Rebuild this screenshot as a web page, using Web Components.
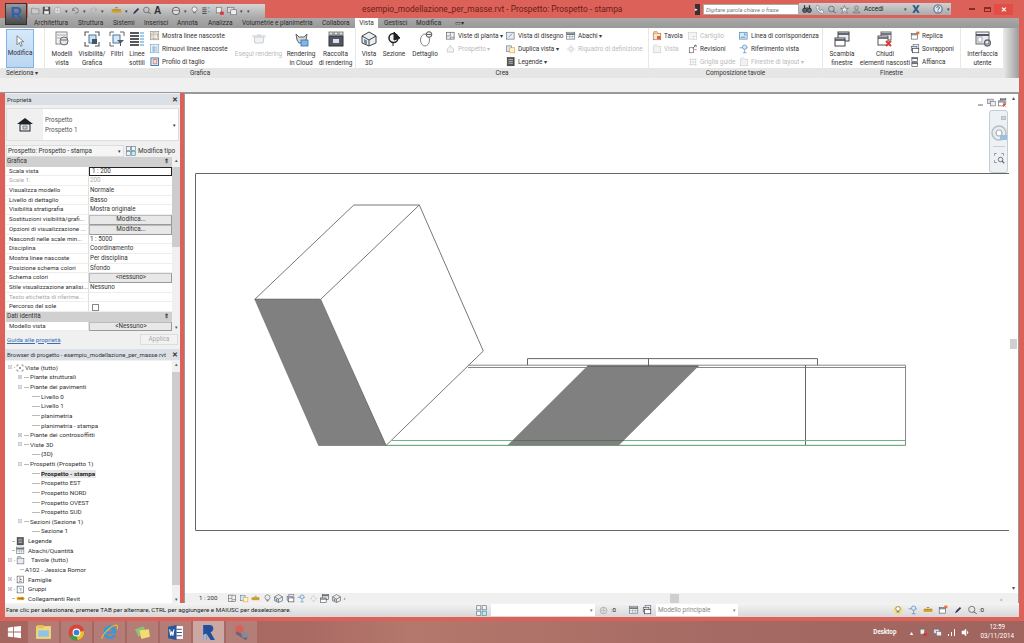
<!DOCTYPE html>
<html lang="it"><head><meta charset="utf-8"><title>Revit</title>
<style>
html,body{margin:0;padding:0;width:1024px;height:643px;overflow:hidden;background:#a96a63;font-family:Roboto,"Noto Sans",sans-serif;}
</style></head><body>
<script>
const S=(c,w=1,f='none')=>`fill="${f}" stroke="${c}" stroke-width="${w}"`;
const I={
cursor:`<path d="M4 1v12l3-3 2 5 2-1-2-5h4z" ${S('#666',1,'#fff')}/>`,
models:`<rect x="2" y="1" width="11" height="12" ${S('#888',1,'#f2f2f2')}/><path d="M3 4h9M3 7h4" ${S('#aaa')}/><ellipse cx="10" cy="10" rx="4" ry="4" ${S('#666',1,'#dfe8f2')}/><path d="M7 9h6" ${S('#666')}/>`,
vis:`<path d="M1 5V1h4M11 1h4v4M15 11v4h-4M5 15H1v-4" ${S('#555',1.1)}/><rect x="5" y="4" width="7" height="8" ${S('#47a',1,'#cfe0ee')}/><rect x="8" y="8" width="5" height="5" fill="#456"/>`,
filt:`<path d="M1 5V1h4M11 1h4v4M5 15H1v-4" ${S('#666',1)}/><rect x="4" y="4" width="7" height="8" ${S('#47a',1,'#dbe8f2')}/><path d="M8 9h7l-3 3v3h-1v-3z" fill="#556"/>`,
lines:`<path d="M1 2h9M1 5h9M1 8h9M1 11h9M1 14h9" ${S('#222',1.5)}/><path d="M11 2h4M11 5h4M11 8h4M11 11h4M11 14h4" ${S('#49c',1)}/>`,
show:`<rect x="1" y="1" width="13" height="13" ${S('#7a8a9a',1,'#fff')}/><rect x="3" y="3" width="9" height="9" ${S('#d9a050',1,'#f7f1e2')}/><path d="M1 6h13M6 1v13" ${S('#7aa5c8',.8)}/>`,
rem:`<rect x="1" y="1" width="13" height="13" ${S('#7aa5c8',1,'#e9f2f9')}/><path d="M3 5h9M3 8h9M3 11h9M6 3v10" ${S('#6a9ac0',.9)}/>`,
crop:`<rect x="1.500" y="1.500" width="12" height="12" ${S('#2a6fb0',1.4,'#e9f2f9')}/><rect x="5" y="4" width="6" height="7" ${S('#d06050',1,'#f5d9c8')}/>`,
teapotg:`<path d="M3 6h10l-1 6H4zM1 5h14M6 4h4" ${S('#c9ced2',1,'#f1f3f4')}/>`,
teapot:`<path d="M3 3l3 3h5l3-3-1 6-3 3H6L4 9z" ${S('#555',.9,'#cfd8de')}/><rect x="8" y="9" width="7" height="6" ${S('#2f6fb4',.8,'#86b4e0')}/>`,
gallery:`<rect x="1" y="1" width="4" height="3" ${S('#666',.8,'#e0e0e0')}/><rect x="6" y="1" width="4" height="3" ${S('#666',.8,'#e0e0e0')}/><rect x="11" y="1" width="4" height="3" ${S('#666',.8,'#e0e0e0')}/><rect x="1" y="5" width="14" height="10" ${S('#333',1,'#556')}/><rect x="5" y="8" width="6" height="4" fill="#d7e4ee"/>`,
house:`<path d="M8 1l7 4v7l-7 3-7-3V5z" ${S('#444',1,'#e9eef2')}/><path d="M1 5l7 4 7-4M8 9v6" ${S('#444',1)}/><path d="M3 8l3 1.500v4L3 12z" fill="#6d8aa0"/>`,
section:`<circle cx="7.500" cy="7" r="4.500" ${S('#222',1.5,'#eef2f5')}/><path d="M8 1l6 6-6 2zM7 11v4" fill="#222" stroke="#222"/>`,
detail:`<path d="M3.500 9a4.500 6 0 1 0 9 0a4.500 6 0 1 0-9 0" ${S('#777',.9,'#fff')}/><circle cx="12" cy="3.500" r="2.800" ${S('#444',.9,'#eee')}/><path d="M9.500 3.500h5" ${S('#444',.8)}/>`,
plan:`<rect x="1" y="2" width="12" height="11" ${S('#555',1,'#eef2f5')}/><path d="M1 8h6V2M7 13v-3h6" ${S('#555',.9)}/>`,
elev:`<path d="M2 8l5-5 5 5v5H2z" ${S('#bbb',1,'#f3f3f3')}/><path d="M7 1v4" ${S('#c9c9c9')}/>`,
draw:`<rect x="1" y="2" width="12" height="11" ${S('#666',1,'#e7eef5')}/><path d="M4 10l6-6" ${S('#4a84bb',1.2)}/>`,
dup:`<rect x="1" y="3" width="8" height="9" ${S('#5a7a99',1,'#d8e6f2')}/><rect x="6" y="6" width="8" height="8" ${S('#e6a030',1,'#fff2cf')}/>`,
leg:`<rect x="2" y="1" width="11" height="13" ${S('#333',1,'#555')}/><path d="M4 4h7M4 7h7M4 10h7" ${S('#eee',1)}/>`,
sched:`<rect x="1" y="2" width="13" height="11" ${S('#5a6672',1,'#fff')}/><path d="M1 5h13" ${S('#56606a',2.4)}/><path d="M1 9h13M6 5v8M10 5v8" ${S('#7a8a96',.8)}/>`,
scope:`<path d="M8 1v14M1 8h14" ${S('#c9c9c9',1)}/><rect x="5" y="5" width="6" height="6" ${S('#ccc',1,'#f3f3f3')}/>`,
sheet:`<rect x="2" y="4" width="12" height="10" ${S('#a66',1,'#f6e6cc')}/><path d="M3 4V1h5l2 3" ${S('#d48a35',1.2,'#ffd58c')}/><rect x="8" y="8" width="6" height="5" fill="#e2613d"/>`,
sheetg:`<rect x="2" y="4" width="12" height="10" ${S('#ccc',1,'#f2f2f2')}/><path d="M3 4V1h5l2 3" ${S('#ddd',1,'#f4f4f4')}/>`,
sheets:`<rect x="2" y="4" width="12" height="10" ${S('#667',1,'#e8edf1')}/><path d="M3 4V1h5l2 3" ${S('#778',1,'#cdd6de')}/>`,
title:`<rect x="1" y="2" width="13" height="11" ${S('#ccc',1,'#f4f4f4')}/><rect x="9" y="9" width="5" height="4" ${S('#ccc',.8,'#fff')}/>`,
rev:`<rect x="2" y="6" width="7" height="8" ${S('#555',1,'#fff')}/><path d="M8 7l4-5M10 2h3v3" ${S('#444',1.1)}/><path d="M10 9h4" ${S('#c44',1)}/>`,
grid:`<path d="M2 4h12M2 8h12M2 12h12M4 2v12M8 2v12M12 2v12" ${S('#ccc',.9,'#f5f5f5')}/>`,
match:`<rect x="1" y="2" width="12" height="11" ${S('#3c79b4',1,'#d9e8f4')}/><path d="M8 2l5 5H8z" fill="#7fb2dc"/><path d="M3 10h7" ${S('#3c79b4',1.2)}/>`,
ref:`<path d="M1 6h13" ${S('#5a8fc2',1.2)}/><circle cx="9" cy="5" r="3.500" ${S('#4a80b4',1,'#d9e8f4')}/><path d="M9 9v5M6 14h6" ${S('#4a80b4',1)}/>`,
swap:`<rect x="4" y="1" width="11" height="9" ${S('#444',1,'#e8eef3')}/><path d="M4 3h11" ${S('#445',1.6)}/><rect x="1" y="7" width="10" height="8" ${S('#444',1,'#fff')}/><path d="M1 9h10" ${S('#445',1.6)}/>`,
close:`<rect x="4" y="1" width="10" height="8" ${S('#666',1,'#eef1f4')}/><path d="M4 3h10" ${S('#556',1.6)}/><rect x="1" y="5" width="10" height="9" ${S('#555',1,'#fff')}/><path d="M1 7h10" ${S('#556',1.6)}/><path d="M9 10l5 5M14 10l-5 5" ${S('#e03a30',2)}/>`,
repl:`<rect x="2" y="4" width="10" height="9" ${S('#555',1,'#fff')}/><path d="M2 6h10" ${S('#556',1.4)}/><rect x="10" y="1" width="5" height="4" fill="#e8703a"/>`,
casc:`<rect x="5" y="1" width="9" height="7" ${S('#667',1,'#e8eef3')}/><rect x="2" y="4" width="9" height="7" ${S('#556',1,'#d8e2ea')}/><rect x="4" y="7" width="10" height="7" ${S('#334',1,'#fff')}/>`,
tile:`<rect x="3" y="1" width="9" height="6" ${S('#334',1,'#fff')}/><rect x="3" y="9" width="9" height="6" ${S('#334',1,'#fff')}/><path d="M3 2.500h9M3 10.500h9" ${S('#334',1.2)}/>`,
ui:`<rect x="1" y="1" width="13" height="12" ${S('#666',1,'#e8edf1')}/><path d="M1 4h13" ${S('#556',2)}/><rect x="3" y="6" width="4" height="5" ${S('#999',.8,'#fff')}/><circle cx="12.500" cy="12" r="3" ${S('#667',1.3)}/>`,
homeb:`<path d="M8 1l8 6H0z" fill="#222"/><rect x="3" y="7" width="10" height="7" ${S('#222',1,'#e8edf1')}/><rect x="6" y="9" width="4" height="3" ${S('#667',.7,'#c5d3de')}/>`,
type:`<rect x="1" y="1" width="6" height="6" ${S('#678',1,'#f2f5f7')}/><rect x="9" y="1" width="6" height="6" ${S('#678',1,'#f2f5f7')}/><rect x="1" y="9" width="6" height="6" ${S('#678',1,'#f2f5f7')}/><rect x="9" y="9" width="6" height="6" ${S('#39a',1,'#cfe5f2')}/>`,
open:`<path d="M1 4h5l1 1h7v9H1z" ${S('#777',1,'#cbcbcb')}/>`,
save:`<rect x="2" y="2" width="12" height="12" ${S('#333',1,'#556')}/><rect x="5" y="2" width="6" height="4" fill="#ddd"/><rect x="4" y="9" width="8" height="5" fill="#eee"/>`,
globe:`<circle cx="8" cy="8" r="6" ${S('#999',1,'#ddd')}/><path d="M3 8h10M8 2v12" ${S('#aaa',.8)}/>`,
undo:`<path d="M3 8a5 5 0 1 1 4 5M3 4v4h4" ${S('#667',1.2)}/>`,
redo:`<path d="M13 8a5 5 0 1 0-4 5M13 4v4H9" ${S('#aaa',1.2)}/>`,
meas:`<rect x="1" y="6" width="14" height="5" fill="#d8a020"/><path d="M4 6v2M7 6v2M10 6v2M13 6v2" ${S('#665',.8)}/><path d="M6 4h4" ${S('#555',1)}/>`,
pen:`<path d="M3 13l2-4 6-6 2 2-6 6z" fill="#335"/>`,
tag:`<circle cx="6" cy="7" r="5" ${S('#556',1.2)}/><path d="M9 11l5 3" ${S('#556',1.4)}/>`,
sph:`<circle cx="8" cy="8" r="6" ${S('#555',1.4,'#ddd')}/><path d="M3 7h10" ${S('#555',1)}/>`,
bulb:`<circle cx="8" cy="6" r="4.500" ${S('#555',1,'#eee')}/><path d="M6 12h4" ${S('#555',1.5)}/>`,
bulby:`<circle cx="8" cy="8" r="7" fill="#f6dc7a"/><circle cx="8" cy="6" r="3.500" ${S('#665',1,'#fff')}/><path d="M6 11h4" ${S('#555',1.5)}/>`,
tl:`<path d="M2 3h7M2 6h7M2 9h7M2 12h7" ${S('#333',1.2)}/><path d="M11 3h3M11 9h3" ${S('#39c',1.4)}/>`,
winq:`<rect x="2" y="2" width="8" height="9" ${S('#666',1,'#eee')}/><rect x="8" y="9" width="6" height="5" fill="#d33"/>`,
wins:`<rect x="1" y="2" width="10" height="8" ${S('#667',1,'#ddd')}/><rect x="6" y="6" width="9" height="8" ${S('#667',1,'#eee')}/>`,
bino:`<circle cx="4.500" cy="10" r="3.500" ${S('#333',1.5,'#567')}/><circle cx="11.500" cy="10" r="3.500" ${S('#333',1.5,'#567')}/><path d="M4 2v6M12 2v6M7 6h2" ${S('#333',2)}/>`,
phone:`<path d="M3 2l3 1 1 3-2 1a9 9 0 0 0 4 4l1-2 3 1 1 3-2 2C7 15 1 9 2 4z" ${S('#778',1,'#e8eef2')}/>`,
star:`<path d="M8 1l2 5h5l-4 3 2 6-5-4-5 4 2-6-4-3h5z" ${S('#556',1,'#eee')}/>`,
user:`<circle cx="8" cy="5" r="3.200" ${S('#556',1)}/><path d="M2 14c1-5 11-5 12 0z" ${S('#556',1)}/>`,
exch:`<path d="M2 2h4l2 4 2-4h4l-4 6 4 6h-4l-2-4-2 4H2l4-6z" fill="#2d587f"/>`,
help:`<circle cx="8" cy="8" r="6.500" ${S('#446',1.3,'#dce6ee')}/><path d="M5.800 6a2.200 2 0 1 1 3.200 2c-1 .6-1 1-1 2M8 11.500v1.500" ${S('#247',1.4)}/>`,
minus:`<path d="M2 12h10" stroke="#444" stroke-width="1.600"/>`,
plus:`<rect x="3" y="3" width="8" height="8" ${S('#aab',1,'#f4f4f4')}/><path d="M5 7h4M7 5v4" ${S('#778',1)}/>`,
minusb:`<rect x="3" y="3" width="8" height="8" ${S('#aab',1,'#f4f4f4')}/><path d="M5 7h4" ${S('#778',1)}/>`,
steer:`<circle cx="8" cy="8" r="7" ${S('#b4bcc3',1.4,'#e9edf0')}/><circle cx="8" cy="8" r="3" ${S('#a8b1b9',1.2,'#fff')}/><rect x="9" y="10" width="7" height="5" fill="#9cc1de"/>`,
zoomv:`<path d="M2 2h3M2 2v3M14 2h-3M14 2v3M2 14h3M2 14v-3" ${S('#889',1.1)}/><circle cx="10" cy="10" r="3" ${S('#667',1.2)}/><path d="M12 12l3 3" ${S('#667',1.5)}/>`,
views:`<path d="M2 2h3M11 2h3M2 14h3M11 14h3M2 2v3M14 2v3M2 11v3M14 11v3" ${S('#555',1.2)}/><circle cx="8" cy="8" r="2" fill="#777"/>`,
famiglie:`<rect x="2" y="2" width="11" height="12" ${S('#445',1,'#fff')}/><path d="M7 4v4h3M5 11h5" ${S('#333',1.1)}/>`,
gruppi:`<rect x="2" y="2" width="11" height="12" ${S('#445',1,'#fff')}/><path d="M5 5l5 2-3 2 3 2" ${S('#4a90c2',1.1)}/>`,
link:`<ellipse cx="5" cy="8" rx="4" ry="3" fill="#e8a810"/><ellipse cx="11" cy="8" rx="4" ry="3" fill="#d39410"/><path d="M4 8h8" ${S('#7c5b10',1)}/>`,
};
function ic(n,s=16,st=''){return `<svg xmlns="http://www.w3.org/2000/svg" width="${s}" height="${s}" viewBox="0 0 16 16" style="display:block;flex:none;${st}">${I[n]||''}</svg>`}
function def(tag,css,html,init){customElements.define(tag,class extends HTMLElement{constructor(){super();this.attachShadow({mode:'open'});}connectedCallback(){if(this._d)return;this._d=1;const a=n=>this.getAttribute(n);this.shadowRoot.innerHTML=`<style>${css}</style>`+(typeof html==='function'?html(a):html);if(init)init(this)}})}
const base=`:host{box-sizing:border-box;font-family:Roboto,"Noto Sans",sans-serif}*{box-sizing:border-box}`;
const setw=el=>{el.style.width=el.getAttribute('w')+'px'};

def('x-app',base+`:host{display:flex;flex-direction:column;width:1024px;height:643px;background:#a96a63}
.win{height:621px;background:#dc6259;display:flex;flex-direction:column;flex:none;padding-bottom:4px}
.body{display:flex;flex:1;min-height:0;padding:0 5px;gap:4px;background:#dc6259}
.side{flex:none;display:flex;width:175px;flex-direction:column;background:#f0f0f0;overflow:hidden}
`,`<div class="win"><slot name="top"></slot><div class="body"><div class="side"><slot name="side"></slot></div><slot name="main"></slot></div><slot name="status"></slot></div><slot name="task"></slot>`);

def('x-titlebar',base+`:host{display:flex;height:18px;flex:none;align-items:center;position:relative;padding-left:28px}
.r{position:absolute;left:5px;top:3px;width:22px;height:22px;background:linear-gradient(#9a9a9a,#4a4a4a);border:1px solid #333;z-index:2;display:flex;align-items:center;justify-content:center;color:#2a63b8;font:900 16px "Liberation Sans",sans-serif}
.q{height:14px;margin-top:3px;width:237px;background:linear-gradient(#d5d5d5,#a8a8a8);display:flex;align-items:center;gap:2px;padding-left:3px;flex:none}
.t{margin-left:97px;font-size:8.4px;color:#6b1d18;width:250px;white-space:nowrap;flex:none}
.d{font-size:5px;color:#444;width:5px;text-align:center;flex:none}
.inf{margin-left:83px;display:flex;align-items:center;height:12px;flex:none}
.box{width:96px;height:11px;background:#fff;border:1px solid #aaa;font:italic 5.800px Roboto,sans-serif;color:#777;padding:1px 0 0 2px;white-space:nowrap;line-height:8px}
.tail{display:flex;align-items:center;gap:3px;background:linear-gradient(#d0d0d0,#aaa);height:12px;padding-left:3px;width:152px;flex:none}
.acc{font-size:6.4px;color:#222;width:50px}
.ar{width:5px;height:11px;background:#333;color:#fff;font-size:5px;line-height:11px;margin-right:3px}
.wb{display:flex;align-items:center;flex:none}
.wb b{display:block;width:6px;height:1.500px;background:#8a2a24;margin:0 9px 0 18px}
.wb i{display:block;width:7px;height:5px;border:1px solid #8a2a24;border-top-width:2px;margin-right:3px}
.wb u{display:block;width:19px;height:11px;background:#e24d45;color:#fff;font:bold 7px/11px "Liberation Sans",sans-serif;text-align:center;text-decoration:none}
`,`<div class="r">R</div><div class="q">${ic('open',9)}${ic('save',9)}${ic('globe',9)}<span class="d">▾</span>${ic('undo',9)}<span class="d">▾</span>${ic('redo',9)}<span class="d">▾</span>${ic('meas',11,'margin-left:4px')}<span class="d">▾</span>${ic('pen',10)}${ic('tag',9)}<span style="font:bold 10px 'Liberation Sans';color:#333;line-height:1;width:9px">A</span>${ic('sph',10,'margin-left:6px')}<span class="d">▾</span>${ic('bulb',9)}${ic('tl',10)}${ic('winq',10,'margin-left:2px')}${ic('wins',10)}<span class="d">▾</span><span class="d">▾</span></div>
<div class="t">esempio_modellazione_per_masse.rvt - Prospetto: Prospetto - stampa</div>
<div class="inf"><div class="ar">▸</div><div class="box">Digitare parola chiave o frase</div><div class="tail">${ic('bino',10)}${ic('phone',10)}${ic('tag',9)}${ic('star',9)}${ic('user',9)}<span class="acc">Accedi</span><span class="d">▾</span>${ic('exch',10)}<span style="width:8px"></span>${ic('help',10)}<span class="d">▾</span></div></div>
<div class="wb"><b></b><i></i><u>✕</u></div>`);

def('x-tabs',base+`:host{display:flex;height:10px;flex:none;margin:0 5px 0 0;background:linear-gradient(#a9a9a9,#999);padding-left:34px;font-size:6.5px;line-height:10px;color:#2b2b2b;white-space:nowrap}
::slotted(*){flex:none}`,`<slot></slot>`);
def('x-tab',base+`:host{display:block;flex:none}
:host([on]){background:#fff;text-align:center;color:#333}`,`<slot></slot>`);

def('x-ribbon',base+`:host{display:flex;height:50px;flex:none;background:#fff;margin-right:5px}
.e{width:15px;flex:none;background:linear-gradient(90deg,#e6e6e6,#9c9c9c)}`,`<slot></slot><div class="e"></div>`);
def('x-strip',base+`:host{display:block;height:15px;background:#f0f0f0;border-bottom:1px solid #999;margin-right:5px;flex:none}`,``);
def('x-rp',base+`:host{display:flex;flex-direction:column;flex:none;border-right:1px solid #e8e8e8}
.c{height:40px;display:flex;background:#fff}
.l{height:10px;background:#e6e6e6;font-size:6.4px;line-height:10px;text-align:center;color:#333;white-space:nowrap}
::slotted(*){flex:none}`,a=>`<div class="c"><slot></slot></div><div class="l">${a('label')||''}</div>`,setw);
def('x-tool',base+`:host{display:flex;flex-direction:column;align-items:center;flex:none;font-size:6.4px;line-height:9px;color:#333;text-align:center;padding-top:3px;white-space:nowrap}
:host([dis]){color:#bbb}
.lb{margin-top:3px}
:host([sel]){background:linear-gradient(#d6e9fa,#b9d6f1);border:1px solid #7fb5e6;padding-top:5px;margin-top:1px;height:39px}
:host([sel]) .lb{margin-top:2px}`,a=>`${ic(a('n'),+a('s')||16)}<div class="lb"><slot></slot></div>`,setw);
def('x-col',base+`:host{display:flex;flex-direction:column;flex:none;padding-top:2.500px;gap:3.300px}`,`<slot></slot>`,setw);
def('x-sm',base+`:host{display:flex;align-items:center;gap:2px;height:10px;font-size:6.4px;color:#333;white-space:nowrap;flex:none}
:host([dis]){color:#bbb}`,a=>`${a('n')?ic(a('n'),10):'<span style="width:10px;display:block"></span>'}<slot></slot>`);

def('x-pane',base+`:host{display:block;flex:none}
.h{height:11px;background:#dbe0e6;display:flex;justify-content:space-between;align-items:center;font-size:6px;padding:0 2px;color:#333;white-space:nowrap;margin-top:1px}
.h b{font:bold 7px "Liberation Sans";color:#333}`,a=>`<div class="h"><span>${a('heading')}</span><b>✕</b></div><slot></slot>`);

def('x-props',base+`:host{display:block;font-size:6.300px;color:#333}
.sel{height:33px;margin:3px 1px 0;background:#fff;border:1px solid #ddd;display:flex;align-items:center}
.ih{width:36px;height:100%;background:#f0f0f0;display:flex;align-items:center;justify-content:center}
.tx{padding:2.500px 0 0 2px;line-height:9.500px;color:#555;flex:1}
.dd{font-size:5px;margin-right:2px;color:#333}
.row{display:flex;align-items:center;height:13px;margin:3px 1px 0;gap:2px}
.cb{width:118px;height:12px;background:#f5f5f5;border:1px solid #ddd;padding-left:1px;line-height:10px;display:flex;justify-content:space-between;white-space:nowrap}
.mt{display:flex;align-items:center;gap:2px;white-space:nowrap;font-size:6.400px}
.tb{display:flex;height:174px;margin:0 0 0 1px;overflow:hidden}
.list{width:166px;flex:none;display:block;overflow:hidden}
.scr{width:8px;background:#f0f0f0;display:flex;flex-direction:column;font-size:5px;color:#555;text-align:center;flex:none}
.thumb{background:#cdcdcd;height:80px;margin-top:3px}
.ft{height:17px;display:flex;align-items:center;justify-content:space-between;padding:0 2px;background:#f0f0f0}
.ft a{color:#3b6fb5;text-decoration:underline;font-size:6.200px}
.ft i{font-style:normal;width:38px;height:11px;border:1px solid #ddd;color:#aaa;text-align:center;line-height:9px;background:#f2f2f2}`,
`<div class="sel"><div class="ih">${ic('homeb',16)}</div><div class="tx">Prospetto<br>Prospetto 1</div><div class="dd">▾</div></div>
<div class="row"><div class="cb"><span>Prospetto: Prospetto - stampa</span><span style="font-size:5px;margin-right:2px">▾</span></div><div class="mt">${ic('type',10)}<span>Modifica tipo</span></div></div>
<div class="tb"><div class="list"><slot></slot></div><div class="scr"><span style="height:7px;line-height:7px">▴</span><div class="thumb"></div><span style="margin-top:auto;height:7px;line-height:7px">▾</span></div></div>
<div class="ft"><a>Guida alle proprietà</a><i>Applica</i></div>`);
def('x-sec',base+`:host{display:flex;justify-content:space-between;height:9.700px;background:#d0d0d0;font-size:6.300px;line-height:9.700px;padding:0 3px 0 1px;color:#333}
.ch{font:bold 6px/9.700px "Liberation Sans";}`,`<slot></slot><span class="ch">⇑</span>`);
def('x-pr',base+`:host{display:grid;grid-template-columns:83px 83px;height:9.700px;font-size:6.300px;line-height:9px;color:#333;background:#fff;white-space:nowrap;overflow:hidden}
.n{padding-left:3px;font-size:6.150px;border-right:1px solid #e0e0e0;border-bottom:1px solid #eee;overflow:hidden}
.v{padding-left:1px;border-bottom:1px solid #eee;overflow:hidden}
:host([dim]){color:#aaa}
:host([btn]) .v{background:#e8e8e8;border:1px solid #bbb;border-right-color:#999;border-bottom-color:#999;text-align:center;line-height:7.500px}
:host([act]) .v{border:1px solid #222;line-height:7.500px;padding-left:2px}
:host([chk]) .v span{display:block;width:7px;height:7px;border:1px solid #888;margin:1.300px 0 0 2px}`,a=>`<div class="n">${a('n')}</div><div class="v">${a('chk')!==null?'<span></span>':(a('v')||'').replace(/</g,'&lt;')}</div>`);

def('x-tree',base+`:host{display:flex;height:242px;background:#fff;margin-top:1px;overflow:hidden}
.l{flex:1;padding-top:2px}
.s{width:8px;background:#f0f0f0;display:flex;flex-direction:column;font-size:5px;text-align:center;color:#555;flex:none}
.t{background:#cdcdcd;height:213px;margin-top:4px}`,`<div class="l"><slot></slot></div><div class="s"><span style="height:7px;line-height:7px">▴</span><div class="t"></div><span style="margin-top:auto;height:7px;line-height:7px">▾</span></div>`);
def('x-tr',base+`:host{display:flex;align-items:center;height:9.640px;font-size:6.250px;color:#333;white-space:nowrap}
.tg{width:7px;flex:none}
.ln{flex:none;height:1px;background:#bbb;margin-right:1px}
span{display:block}
:host([cur]) span.tx{background:#e6e6e6;font-weight:700;padding-right:1px;color:#222}`,a=>{const x=+a('x')||0,t=a('tg'),n=a('n'),m=a('m')||3,s=+a('s')||9;return `<div style="width:${x}px;flex:none"></div>${t?ic(t=='p'?'plus':'minusb',7):'<div class="tg"></div>'}<div class="ln" style="width:${a('l')}px"></div>${n?ic(n,s,`margin-right:${m}px`):''}<span class="tx"><slot></slot></span>`});

def('x-view',base+`:host{flex:1;min-width:0;display:flex;flex-direction:column;background:#fff;border:1px solid #999;border-bottom:none;position:relative}
svg.d{display:block;flex:1;width:100%;min-height:0}
.bar{height:10px;flex:none;background:#f0f0f0;display:flex;align-items:center;font-size:6.200px;color:#333;padding-left:14px}
.ics{display:flex;gap:2.500px;margin-left:11px;align-items:center}
.th{margin-left:325px;width:9px;height:9px;background:#cfcfcf}
.tp{position:absolute;top:4px;right:11px;display:flex;gap:2px;align-items:center}
.nav{position:absolute;right:10px;top:16px;width:19px;height:63px;background:#eef1f4;border:1px solid #c5ccd2;border-radius:3px;display:flex;flex-direction:column;align-items:center;gap:5px;padding-top:5px}
.sq{width:5px;height:4px;background:#cfd4d8;border:1px solid #b8bec3;align-self:flex-end;margin-right:1px}
.sc{position:absolute;right:0;top:0;bottom:10px;width:9px;background:#fff;font-size:6px;color:#555;text-align:center;display:flex;flex-direction:column}
.th2{position:absolute;right:1px;top:245px;width:7px;height:10px;background:#d0d0d0}
.ar{margin-left:auto;font-size:6px;margin-right:16px}`,
`<svg class="d" viewBox="185 94 833 499" preserveAspectRatio="none" xmlns="http://www.w3.org/2000/svg">
<g fill="none" stroke="#777" stroke-width="1">
<path d="M195.500 173.500H1009M195.500 173.500V530.500H1009" stroke="#666"/>
<path d="M254.800 299.300L353.800 205H419.300L483.300 351L386 445.500L319.500 299.300H254.800M320.700 299.300L419.300 205"/>
<path d="M468 365.200H905.500V445.500H386M468 367.500H905.500" stroke="#888"/>
<path d="M805.500 365V445.500" stroke="#666"/>
<path d="M527.500 365V358.600H817.500V365M648.500 358.600V366" stroke="#666"/>
<path d="M386 445.300H905" stroke="#6fb283"/>
<path d="M392 440.500H905" stroke="#6fb283"/>
</g>
<path d="M254.800 299.300H320.700L386 445.500H318.700Z" fill="#808080" stroke="#666" stroke-width=".6"/>
<path d="M587.300 366H698.700L618.700 445.500H507.300Z" fill="#808080"/>
<path d="M587.300 366H698.700" stroke="#555" fill="none"/>
<path d="M513 440.500H624" stroke="#5a6f5f" fill="none"/>
</svg>
<div class="tp">${ic('minus',8)}${ic('wins',9)}${ic('close',9)}</div>
<div class="sc"><span style="height:9px">▴</span><span style="margin-top:auto;height:9px">▾</span></div><div class="th2"></div>
<div class="nav"><span class="sq"></span>${ic('steer',16)}<span style="width:12px;height:1px;background:#ccd"></span>${ic('zoomv',12)}</div>
<div class="bar">1 : 200<div class="ics">${ic('plan',9)}${ic('dup',9)}${ic('meas',9)}${ic('bulb',9)}${ic('house',9)}${ic('casc',9)}${ic('ref',9)}${ic('scope',9)}${ic('swap',9)}${ic('house',9)}<span>‹</span></div><div class="th"></div><div class="ar">›</div></div>`);

def('x-status',base+`:host{display:flex;height:14px;flex:none;margin:0 5px;align-items:center;background:linear-gradient(#f4f4f4,#d7d7d7);font-size:6.250px;color:#222;white-space:nowrap}
.m{width:471px;padding-left:1px;flex:none}
.w{width:104px;height:12px;background:#fff;margin-left:4px;flex:none;font-size:5px;text-align:right;line-height:12px;padding-right:2px;color:#777}
.n{display:flex;align-items:center;gap:3px;margin-left:4px;flex:none}
.c{width:82px;height:12px;background:#fff;color:#888;margin-left:4px;font-size:6.400px;line-height:12px;padding-left:2px;display:flex;justify-content:space-between;padding-right:2px;flex:none}
.r{display:flex;gap:5px;margin-left:155px;align-items:center;flex:none}`,
`<div class="m">Fare clic per selezionare, premere TAB per alternare, CTRL per aggiungere e MAIUSC per deselezionare.</div>${ic('type',11)}<div class="w">▾</div><div class="n">${ic('globe',9)}<span>:0</span><span style="width:7px"></span>${ic('sched',10)}${ic('casc',10)}</div><div class="c"><span>Modello principale</span><span style="font-size:5px">▾</span></div><div class="r">${ic('bulby',10)}${ic('ref',10)}${ic('meas',10)}${ic('repl',10)}${ic('pen',10)}${ic('tag',10)}<span style="margin-left:-4px">:0</span></div>`);

const TI={
start:`<g fill="#fff"><path d="M1 3l6-1v5.500H1zM8 2l8-1v6.500H8zM1 8.500h6V14l-6-1zM8 8.500h8V15l-8-1z"/></g>`,
folder:`<rect x="1" y="2" width="14" height="12" fill="#f0d77a"/><rect x="3" y="6" width="10" height="6" fill="#8fc3e8"/><rect x="2" y="1" width="6" height="3" fill="#e8c34e"/>`,
chrome:`<circle cx="8" cy="8" r="7.500" fill="#d9463a"/><path d="M8 8L1.500 12A7.500 7.500 0 0 0 9 15.400z" fill="#3f9d48"/><path d="M8 8l7 -1.500A7.500 7.500 0 0 1 9 15.400z" fill="#e8c32e"/><circle cx="8" cy="8" r="3.200" fill="#3f7fd0" stroke="#fff"/>`,
ie:`<path d="M14 9H5c.3 3 4.500 4 6.500 1.400h2.700C12 15.700 3 15.500 2.300 8.500 2.200 3.500 6 1.500 9 1.500c3.800 0 5.500 3.500 5 7.500zM5.200 7h6c-.4-3-5.300-3-6 0z" fill="#2f9ae0"/><path d="M1 14C0 11 9 2 14 1c2 0 2 2 1 4" fill="none" stroke="#e8c32e" stroke-width="1"/>`,
sticky:`<path d="M1 5l8-3 3 7-8 3z" fill="#8ec07c"/><path d="M5 6l9-1 1 7-8 2z" fill="#f0dc70"/>`,
word:`<rect x="7" y="2" width="8" height="12" fill="#fff"/><path d="M9 5h5M9 8h5M9 11h5" stroke="#2b579a"/><path d="M1 2.500l8-1.500v14l-8-1.500z" fill="#2b579a"/><path d="M2.500 5l1 6 1-4 1 4 1-6" fill="none" stroke="#fff"/>`,
rev:`<path d="M3 1h6c4 0 5 5 1 7l4 7h-4L6 9v6H3z" fill="#20509c"/><path d="M3 15v-5l3-1v6z" fill="#9fb8da"/>`,
oth:`<circle cx="6" cy="5" r="4" fill="#d9605a"/><path d="M3 8l10 6" stroke="#667" stroke-width="3"/><circle cx="11" cy="10" r="3" fill="#889"/>`
};
const ti=(n,s=16)=>`<svg width="${s}" height="${s}" viewBox="0 0 16 16" style="display:block">${TI[n]}</svg>`;
def('x-task',base+`:host{display:flex;height:22px;flex:none;align-items:stretch;background:linear-gradient(90deg,#a66660 0,#a96a63 30%,#b4786c 40%,#a56a63 70%,#9f645d 100%);color:#fff}
.st{width:28px;display:flex;align-items:center;justify-content:center}
.t{width:31px;margin-right:2px;display:flex;align-items:center;justify-content:center;background:rgba(255,255,255,.14)}
.t.on{background:rgba(255,255,255,.42)}
.r{margin-left:auto;display:flex;align-items:center;font-size:6.300px;padding-right:10px}
.cl{text-align:center;line-height:9.500px;margin-left:10px;font-size:6.300px}
.tr{display:flex;gap:5px;align-items:center;margin-left:6px}`,
`<div class="st">${ti('start',14)}</div>${['folder','chrome','ie','sticky','word','rev','oth'].map(n=>`<div class="t${n=='rev'?' on':''}">${ti(n,17)}</div>`).join('')}
<div class="r"><span style="font-weight:600">Desktop</span><span style="margin-left:14px;font-size:6px">▴</span><div class="tr">${ic('winq',9)}${ic('wins',9)}<svg width="9" height="9" viewBox="0 0 9 9"><path d="M1 8h1V6H1zM4 8h1V4H4zM7 8h1V1H7z" fill="#fff"/></svg><svg width="9" height="9" viewBox="0 0 9 9"><path d="M1 3h2l2-2v7L3 6H1zM6 3q2 1.500 0 3" fill="#fff" stroke="#fff" stroke-width=".5"/></svg></div><div class="cl">12:59<br>03/11/2014</div></div>`);
</script>
<x-app>
<x-titlebar slot="top"></x-titlebar>
<x-tabs slot="top">
<x-tab style="width:44px">Architettura</x-tab><x-tab style="width:35px">Struttura</x-tab><x-tab style="width:31px">Sistemi</x-tab><x-tab style="width:33px">Inserisci</x-tab><x-tab style="width:31px">Annota</x-tab><x-tab style="width:34px">Analizza</x-tab><x-tab style="width:80px">Volumetrie e planimetria</x-tab><x-tab style="width:33px">Collabora</x-tab><x-tab on style="width:23px">Vista</x-tab><x-tab style="width:6px"></x-tab><x-tab style="width:32px">Gestisci</x-tab><x-tab style="width:39px">Modifica</x-tab><x-tab style="font-size:6px">▭▾</x-tab>
</x-tabs>
<x-ribbon slot="top">
<x-rp w="45" label="Seleziona ▾"><span style="width:6px"></span><x-tool w="28" n="cursor" s="12" sel>Modifica</x-tool></x-rp>
<x-rp w="311" label="Grafica"><span style="width:2px"></span>
<x-tool w="30" n="models">Modelli<br>vista</x-tool><x-tool w="30" n="vis">Visibilità/<br>Grafica</x-tool><x-tool w="20" n="filt">Filtri</x-tool><x-tool w="20" n="lines">Linee<br>sottili</x-tool>
<x-col w="85" style="padding-left:3px"><x-sm n="show">Mostra linee nascoste</x-sm><x-sm n="rem">Rimuovi linee nascoste</x-sm><x-sm n="crop">Profilo di taglio</x-sm></x-col>
<x-tool w="53" n="teapotg" dis>Esegui rendering</x-tool><x-tool w="32" n="teapot">Rendering<br>in Cloud</x-tool><x-tool w="37" n="gallery">Raccolta<br>di rendering</x-tool></x-rp>
<x-rp w="293" label="Crea"><span style="width:1px"></span>
<x-tool w="24" n="house">Vista<br>3D</x-tool><x-tool w="26" n="section">Sezione</x-tool><x-tool w="36" n="detail">Dettaglio</x-tool><span style="width:3px"></span>
<x-col w="60"><x-sm n="plan">Viste di pianta ▾</x-sm><x-sm n="elev" dis>Prospetto ▾</x-sm></x-col>
<x-col w="60"><x-sm n="draw">Vista di disegno</x-sm><x-sm n="dup">Duplica vista ▾</x-sm><x-sm n="leg">Legende ▾</x-sm></x-col>
<x-col w="80"><x-sm n="sched">Abachi ▾</x-sm><x-sm n="scope" dis>Riquadro di definizione</x-sm></x-col></x-rp>
<x-rp w="174" label="Composizione tavole"><span style="width:3px"></span>
<x-col w="36"><x-sm n="sheet">Tavola</x-sm><x-sm n="sheetg" dis>Vista</x-sm></x-col>
<x-col w="51"><x-sm n="title" dis>Cartiglio</x-sm><x-sm n="rev">Revisioni</x-sm><x-sm n="grid" dis>Griglia guide</x-sm></x-col>
<x-col w="82"><x-sm n="match">Linea di corrispondenza</x-sm><x-sm n="ref">Riferimento vista</x-sm><x-sm n="sheetg" dis>Finestre di layout ▾</x-sm></x-col></x-rp>
<x-rp w="138" label="Finestre"><span style="width:1px"></span>
<x-tool w="36" n="swap">Scambia<br>finestre</x-tool><x-tool w="50" n="close">Chiudi<br>elementi nascosti</x-tool>
<x-col w="48"><x-sm n="repl">Replica</x-sm><x-sm n="casc">Sovrapponi</x-sm><x-sm n="tile">Affianca</x-sm></x-col></x-rp>
<x-rp w="43" label=""><x-tool w="43" n="ui">Interfaccia<br>utente</x-tool></x-rp>
</x-ribbon>
<x-strip slot="top"></x-strip>
<x-pane slot="side" heading="Proprietà">
<x-props>
<x-sec>Grafica</x-sec>
<x-pr n="Scala vista" v="1 : 200" act></x-pr>
<x-pr n="Scale  1:" v="200" dim></x-pr>
<x-pr n="Visualizza modello" v="Normale"></x-pr>
<x-pr n="Livello di dettaglio" v="Basso"></x-pr>
<x-pr n="Visibilità stratigrafia" v="Mostra originale"></x-pr>
<x-pr n="Sostituzioni visibilità/grafi..." v="Modifica..." btn></x-pr>
<x-pr n="Opzioni di visualizzazione ..." v="Modifica..." btn></x-pr>
<x-pr n="Nascondi nelle scale min..." v="1 : 5000"></x-pr>
<x-pr n="Disciplina" v="Coordinamento"></x-pr>
<x-pr n="Mostra linee nascoste" v="Per disciplina"></x-pr>
<x-pr n="Posizione schema colori" v="Sfondo"></x-pr>
<x-pr n="Schema colori" v="<nessuno>" btn></x-pr>
<x-pr n="Stile visualizzazione analisi..." v="Nessuno"></x-pr>
<x-pr n="Testo etichetta di riferime..." v="" dim></x-pr>
<x-pr n="Percorso del sole" chk></x-pr>
<x-sec>Dati identità</x-sec>
<x-pr n="Modello vista" v="<Nessuno>" btn></x-pr>
</x-props>
</x-pane>
<x-pane slot="side" heading="Browser di progetto - esempio_modellazione_per_masse.rvt">
<x-tree>
<x-tr tg="m" x="2" n="views" l="1" s="8" m="1">Viste (tutto)</x-tr>
<x-tr tg="p" x="12" l="5">Piante strutturali</x-tr>
<x-tr tg="m" x="12" l="5">Piante dei pavimenti</x-tr>
<x-tr x="20" l="8">Livello 0</x-tr><x-tr x="20" l="8">Livello 1</x-tr><x-tr x="20" l="8">planimetria</x-tr><x-tr x="20" l="8">planimetria - stampa</x-tr>
<x-tr tg="p" x="12" l="5">Piante dei controsoffitti</x-tr>
<x-tr tg="m" x="12" l="5">Viste 3D</x-tr>
<x-tr x="20" l="8">{3D}</x-tr>
<x-tr tg="m" x="12" l="5">Prospetti (Prospetto 1)</x-tr>
<x-tr x="20" l="8" cur>Prospetto - stampa</x-tr>
<x-tr x="20" l="8">Prospetto EST</x-tr><x-tr x="20" l="8">Prospetto NORD</x-tr><x-tr x="20" l="8">Prospetto OVEST</x-tr><x-tr x="20" l="8">Prospetto SUD</x-tr>
<x-tr tg="m" x="12" l="5">Sezioni (Sezione 1)</x-tr>
<x-tr x="20" l="8">Sezione 1</x-tr>
<x-tr x="0" l="3" n="leg">Legende</x-tr>
<x-tr x="0" l="3" n="sched">Abachi/Quantità</x-tr>
<x-tr tg="m" x="2" l="1" n="sheets" m="6">Tavole (tutto)</x-tr>
<x-tr x="8" l="4">A102 - Jessica Romor</x-tr>
<x-tr tg="p" x="2" l="1" n="famiglie">Famiglie</x-tr>
<x-tr tg="p" x="2" l="1" n="gruppi">Gruppi</x-tr>
<x-tr x="0" l="3" n="link">Collegamenti Revit</x-tr>
</x-tree>
</x-pane>
<x-view slot="main"></x-view>
<x-status slot="status"></x-status>
<x-task slot="task"></x-task>
</x-app>
</body></html>
